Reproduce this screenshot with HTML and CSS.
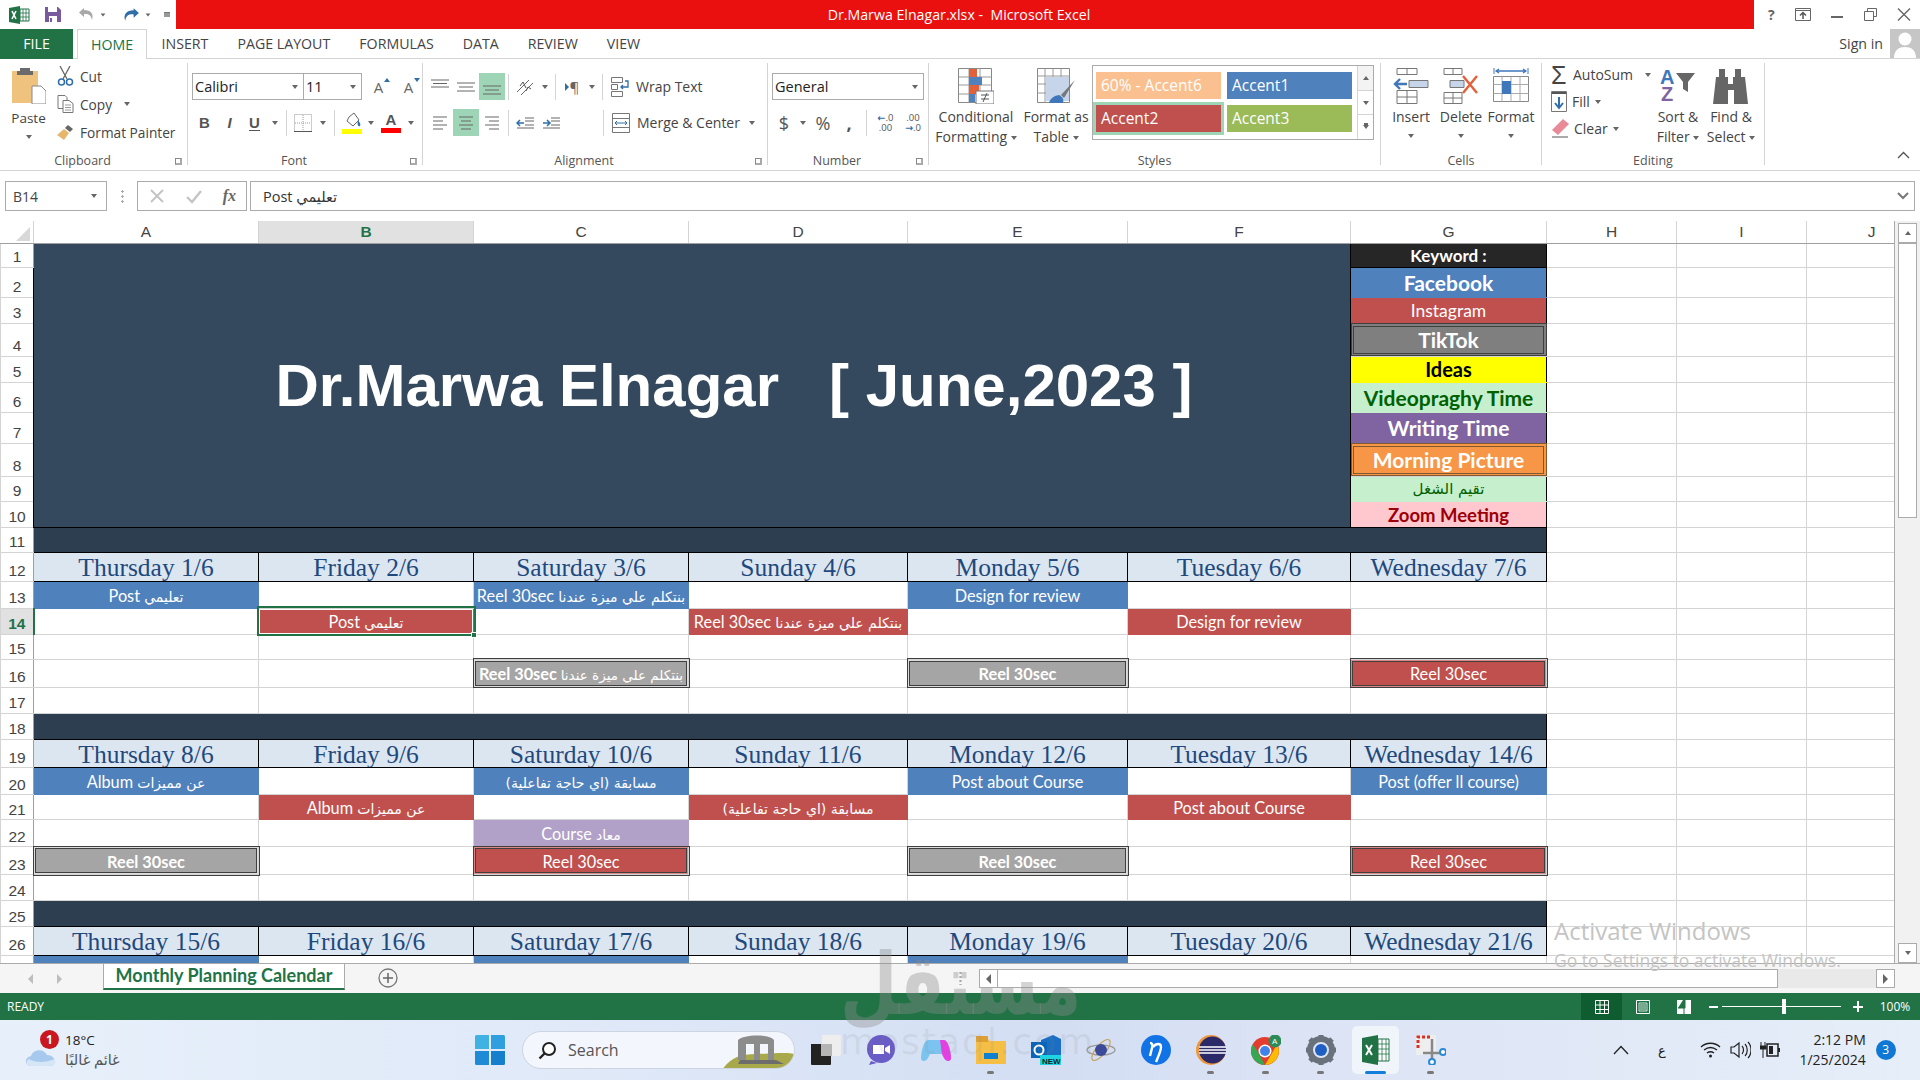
FILE: index.html
```html
<!DOCTYPE html>
<html lang="en">
<head>
  <meta charset="UTF-8">
  <title>Dr.Marwa Elnagar.xlsx - Microsoft Excel</title>
  <link rel="stylesheet" href="styles.css">
</head>
<body>
  <!-- title bar -->
  <header class="titlebar">
    <div class="qat">
      <svg width="24" height="18" viewBox="0 0 24 18"><path d="M1 2 12 0v18L1 16z" fill="#217346"/><path d="M12 3h9v12h-9z" fill="#fff" stroke="#217346"/><path d="M15 3v12M18 3v12M12 7h9M12 11h9" stroke="#217346" stroke-width=".8"/><path d="m4 5 4 8M8 5l-4 8" stroke="#fff" stroke-width="1.6"/></svg>
      <svg class="q-save" width="18" height="17" viewBox="0 0 18 17"><path d="M1 1h13l3 3v12H1z" fill="#7a5a9e"/><path d="M4 1h9v5H4z" fill="#fff"/><path d="M5 10h8v6H5z" fill="#fff"/><path d="M6 12h2v4H6z" fill="#7a5a9e"/></svg>
      <svg class="q-undo" width="19" height="15" viewBox="0 0 19 15"><path d="M7 1 2 5.500 7 10V7c4-.5 7 .5 8 6 2-6-1-10-8-10z" fill="#a8a8a8"/></svg>
      <span class="caret q-caret"></span>
      <svg class="q-redo" width="20" height="16" viewBox="0 0 19 15"><path d="M12 1l5 4.500L12 10V7C8 6.500 5 7.500 4 13 2 7 5 3 12 3z" fill="#2f6ea8"/></svg>
      <span class="caret q-caret"></span>
      <span class="q-more"></span>
    </div>
    <div class="doc-title">Dr.Marwa Elnagar.xlsx -&nbsp; Microsoft Excel</div>
    <div class="win-btns">
      <span class="win-help">?</span>
      <svg width="16" height="13" viewBox="0 0 16 13"><path d="M.5.5h15v12H.5z" fill="none" stroke="#666"/><path d="M1 2.500h14" stroke="#666"/><path d="M8 11V5M5 7.500l3-3 3 3" fill="none" stroke="#555" stroke-width="1.500"/></svg>
      <svg width="14" height="13" viewBox="0 0 14 13"><path d="M1 9h12" stroke="#666" stroke-width="2"/></svg>
      <svg width="13" height="13" viewBox="0 0 13 13"><path d="M3.500 3V.5h9v8H10M.5 3.500h9v9h-9z" fill="none" stroke="#666"/></svg>
      <svg width="14" height="13" viewBox="0 0 14 13"><path d="m1 .5 12 12M13 .5l-12 12" stroke="#666" stroke-width="1.400"/></svg>
    </div>
  </header>

  <!-- ribbon tabs -->
  <nav class="tabs">
    <a class="tab tab-file">FILE</a>
    <a class="tab tab-home">HOME</a>
    <a class="tab">INSERT</a>
    <a class="tab">PAGE LAYOUT</a>
    <a class="tab">FORMULAS</a>
    <a class="tab">DATA</a>
    <a class="tab">REVIEW</a>
    <a class="tab">VIEW</a>
    <span class="signin">Sign in</span>
    <div class="avatar">
      <svg width="30" height="29" viewBox="0 0 30 29"><circle cx="15" cy="10" r="6.500" fill="#fff"/><path d="M4 29c0-8 5-11 11-11s11 3 11 11z" fill="#fff"/></svg>
    </div>
  </nav>

  <!-- ribbon -->
  <section class="ribbon">
    <div class="group g-clipboard">
      <div class="group-body clip-body">
        <div class="paste">
          <svg width="34" height="37" viewBox="0 0 34 37"><path d="M0 4h26v32H0z" fill="#efc27e"/><path d="M8 4V1h10v3h3v4H5V4z" fill="#6b6b6b"/><path d="M20 19h9l5 5v13H20z" fill="#fff" stroke="#888"/></svg>
          <span class="paste-label">Paste</span>
          <span class="caret"></span>
        </div>
        <div class="clip-list">
          <div class="clip-item">
            <svg width="17" height="20" viewBox="0 0 17 20"><path d="M3 0l7 13M13 0 6 13" stroke="#666" stroke-width="1.300"/><circle cx="4.500" cy="16" r="3" fill="none" stroke="#2f6ea8" stroke-width="1.500"/><circle cx="12.500" cy="16" r="3" fill="none" stroke="#2f6ea8" stroke-width="1.500"/></svg>
            <span>Cut</span>
          </div>
          <div class="clip-item">
            <svg width="17" height="18" viewBox="0 0 17 18"><path d="M1 .5h7l2 2v11H1z" fill="#fff" stroke="#777"/><path d="M6 5.500h6l4 3v9H6z" fill="#fff" stroke="#777"/><path d="M8 10h6M8 12.500h6M8 15h6" stroke="#999"/></svg>
            <span>Copy</span><span class="caret copy-caret"></span>
          </div>
          <div class="clip-item">
            <svg width="17" height="17" viewBox="0 0 17 17"><path d="M11 1l5 4-3 3-5-4z" fill="#666"/><path d="M7 5l5 4-5 7-7-5z" fill="#e8b66b"/></svg>
            <span>Format Painter</span>
          </div>
        </div>
      </div>
      <div class="group-label has-launcher">Clipboard<span class="launcher"></span></div>
    </div>

    <div class="group g-font">
      <div class="group-body rows">
        <div class="row">
          <div class="combo combo-font"><span>Calibri</span><span class="caret"></span></div>
          <div class="combo combo-size"><span>11</span><span class="caret"></span></div>
          <span class="tb tb-grow">A<i class="up"></i></span>
          <span class="tb tb-grow">A<i class="down"></i></span>
        </div>
        <div class="row">
          <span class="tb w25 letter"><b>B</b></span>
          <span class="tb w25 letter"><b><em>I</em></b></span>
          <span class="tb w25 letter"><b class="under">U</b></span>
          <span class="tb w16"><span class="caret"></span></span>
          <span class="sep"></span>
          <span class="tb w25"><svg width="18" height="18" viewBox="0 0 18 18"><path d="M.5.500h17v17H.5z" fill="none" stroke="#999" stroke-dasharray="1 1"/><path d="M9 1v16M1 9h16" stroke="#999" stroke-dasharray="1 1"/><path d="M0 17.500h18" stroke="#555"/></svg></span>
          <span class="tb w16"><span class="caret"></span></span>
          <span class="sep"></span>
          <span class="tb w28 color-btn">
            <svg width="20" height="16" viewBox="0 0 20 16"><path d="M7 5 12 1l5 7-6 6-6-5z" fill="#fff" stroke="#666"/><path d="M16 8c2 3 3 4 2 6-2 1-3-2-2-6z" fill="#2f6ea8"/></svg>
            <i class="swatch sw-yellow"></i>
          </span>
          <span class="tb w10"><span class="caret"></span></span>
          <span class="tb w30 color-btn">
            <b class="big-a">A</b>
            <i class="swatch sw-red"></i>
          </span>
          <span class="tb w10"><span class="caret"></span></span>
        </div>
      </div>
      <div class="group-label has-launcher">Font<span class="launcher"></span></div>
    </div>

    <div class="group g-align">
      <div class="group-body rows">
        <div class="row">
          <span class="tb w26"><svg width="20" height="16" viewBox="0 0 20 16"><path d="M1 1h18M3 4.500h14M1 8h18" stroke="#666"/></svg></span>
          <span class="tb w26"><svg width="20" height="16" viewBox="0 0 20 16"><path d="M1 4h18M3 8h14M1 12h18" stroke="#666"/></svg></span>
          <span class="tb w26 on"><svg width="20" height="16" viewBox="0 0 20 16"><path d="M1 7h18M3 11h14M1 15h18" stroke="#666"/></svg></span>
          <span class="sep"></span>
          <span class="tb w26"><svg width="18" height="18" viewBox="0 0 18 18"><path d="M1 14 13 2" stroke="#666"/><path d="M5 17 17 5" stroke="#666"/><path d="m4 8 3-4 3 6M10 13l2-4 3 2" fill="none" stroke="#555"/></svg></span>
          <span class="tb w14"><span class="caret"></span></span>
          <span class="sep"></span>
          <span class="tb w26 rtl-mark"><i></i>&para;</span>
          <span class="tb w14"><span class="caret"></span></span>
          <span class="sep"></span>
          <span class="cmd">
            <svg width="18" height="20" viewBox="0 0 18 20"><path d="M.5.500h11v5H.5zM.5 7.500h6v5h-6zM.5 14.500h11v5H.5z" fill="#fff" stroke="#777"/><path d="M14 4h3v6h-7m2-2-2 2 2 2" fill="none" stroke="#2f6ea8" stroke-width="1.300"/></svg>
            <span>Wrap Text</span>
          </span>
        </div>
        <div class="row">
          <span class="tb w26"><svg width="16" height="14" viewBox="0 0 16 14"><path d="M1 1h14M1 5h10M1 9h14M1 13h10" stroke="#666"/></svg></span>
          <span class="tb w26 on"><svg width="16" height="14" viewBox="0 0 16 14"><path d="M1 1h14M3 5h10M1 9h14M3 13h10" stroke="#666"/></svg></span>
          <span class="tb w26"><svg width="16" height="14" viewBox="0 0 16 14"><path d="M1 1h14M5 5h10M1 9h14M5 13h10" stroke="#666"/></svg></span>
          <span class="sep"></span>
          <span class="tb w26"><svg width="18" height="12" viewBox="0 0 18 12"><path d="M9 1h9M9 4h9M9 8h9M1 11h17" stroke="#666"/><path d="M8 6H1m3-3L1 6l3 3" fill="none" stroke="#2f6ea8" stroke-width="1.500"/></svg></span>
          <span class="tb w26"><svg width="18" height="12" viewBox="0 0 18 12"><path d="M9 1h9M9 4h9M9 8h9M1 11h17" stroke="#666"/><path d="M1 6h7M5 3l3 3-3 3" fill="none" stroke="#2f6ea8" stroke-width="1.500"/></svg></span>
          <span class="spacer-a"></span>
          <span class="sep"></span>
          <span class="cmd">
            <svg width="18" height="20" viewBox="0 0 18 20"><path d="M.5.500h17v19H.5zM.5 5.500h17M.5 14.500h17" fill="none" stroke="#777"/><path d="M3 10h12M5 8l-2 2 2 2M13 8l2 2-2 2" fill="none" stroke="#2f6ea8"/></svg>
            <span>Merge &amp; Center</span><span class="caret merge-caret"></span>
          </span>
        </div>
      </div>
      <div class="group-label has-launcher">Alignment<span class="launcher"></span></div>
    </div>

    <div class="group g-number">
      <div class="group-body rows">
        <div class="row">
          <div class="combo combo-num"><span>General</span><span class="caret"></span></div>
        </div>
        <div class="row">
          <span class="tb w24 glyph">$</span>
          <span class="tb w14"><span class="caret"></span></span>
          <span class="tb w26 glyph">%</span>
          <span class="tb w26 glyph bold">,</span>
          <span class="sep sep-num"></span>
          <span class="tb w29 dec"><i class="arrow">&larr;</i>.0<br>.00</span>
          <span class="tb w26 dec">.00<br><i class="arrow">&rarr;</i>.0</span>
        </div>
      </div>
      <div class="group-label has-launcher">Number<span class="launcher"></span></div>
    </div>

    <div class="group g-styles">
      <div class="group-body styles-body">
        <div class="big big-cf">
          <svg width="36" height="36" viewBox="0 0 36 36"><path d="M.5.500h33v34H.5z" fill="#fff" stroke="#888"/><path d="M11 .5v34M22 .5v34M.5 9h33M.5 17h33M.5 26h33" stroke="#999"/><path d="M11 1h8v8h-8z" fill="#e2603a"/><path d="M11 9h13v8H11z" fill="#4f81bd"/><path d="M11 17h10v9H11z" fill="#e2603a"/><path d="M11 26h6v8h-6z" fill="#4f81bd"/><path d="M18 23h18v13H18z" fill="#fff" stroke="#777"/><path d="M23 27h8M23 31h8M29 25l-4 9" stroke="#555"/></svg>
          <span class="big-text">Conditional</span>
          <span class="big-text">Formatting <span class="caret"></span></span>
        </div>
        <div class="big big-ft">
          <svg width="38" height="36" viewBox="0 0 38 36"><path d="M.5.500h32v34H.5z" fill="#fff" stroke="#888"/><path d="M.5 8h32M8 .5v34M16 .5v34M24 .5v34M.5 16h32M.5 25h32" stroke="#999"/><path d="M9 9h23v24H9z" fill="#c6d5ea"/><path d="M38 12 24 27l3 3z" fill="#777"/><path d="M22 27c-6 1-9 4-10 8h14c1-3 0-6-4-8z" fill="#3f77ba"/></svg>
          <span class="big-text">Format as</span>
          <span class="big-text">Table <span class="caret"></span></span>
        </div>
        <div class="gallery">
          <div class="gallery-grid">
            <span class="style-chip chip-60">60% - Accent6</span>
            <span class="style-chip chip-a1">Accent1</span>
            <span class="style-chip chip-a2">Accent2</span>
            <span class="style-chip chip-a3">Accent3</span>
          </div>
          <div class="gallery-scroll">
            <span class="gs-up"><i class="tri-up"></i></span>
            <span><span class="caret"></span></span>
            <span class="gs-more"><span class="caret"></span></span>
          </div>
        </div>
      </div>
      <div class="group-label">Styles</div>
    </div>

    <div class="group g-cells">
      <div class="group-body cells-body">
        <div class="big big-cell">
          <svg width="36" height="36" viewBox="0 0 36 36"><path d="M4 .5h20v6H4zM14 .5v6M4 22.500h20v13H4zM14 22.500v13M4 29h20" fill="#fff" stroke="#777"/><path d="M16 12.500h19v7H16z" fill="#c6d5ea" stroke="#777"/><path d="M14 16H2m5-5-5 5 5 5" fill="none" stroke="#3f77ba" stroke-width="2.400"/></svg>
          <span class="big-text">Insert</span>
          <span class="caret cell-caret"></span>
        </div>
        <div class="big big-cell">
          <svg width="36" height="36" viewBox="0 0 36 36"><path d="M1 .5h18v6H1zM10 .5v6M1 24.500h18v11H1zM10 24.500v11M1 30h18" fill="#fff" stroke="#777"/><path d="M7 12.500h14v7H7z" fill="#c6d5ea" stroke="#777"/><path d="m20 8 14 17M34 8 20 25" stroke="#e2603a" stroke-width="2.400"/></svg>
          <span class="big-text">Delete</span>
          <span class="caret cell-caret"></span>
        </div>
        <div class="big big-cell">
          <svg width="36" height="36" viewBox="0 0 36 36"><path d="M1 0v6M35 0v6" stroke="#3f77ba"/><path d="M3 3h30M6 1 3 3l3 2M30 1l3 2-3 2" fill="none" stroke="#3f77ba" stroke-width="1.300"/><path d="M.5 8.500h35v25H.5z" fill="#fff" stroke="#888"/><path d="M9 8.500v25M18 8.500v25M27 8.500v25M.5 16.500h35M.5 25.500h35" stroke="#aaa"/><path d="M9 13h9v13H9z" fill="#3f77ba"/></svg>
          <span class="big-text">Format</span>
          <span class="caret cell-caret"></span>
        </div>
      </div>
      <div class="group-label">Cells</div>
    </div>

    <div class="group g-editing">
      <div class="group-body edit-body">
        <div class="edit-list">
          <div class="edit-item"><span class="sigma">&Sigma;</span><span>AutoSum</span><span class="caret sum-caret"></span></div>
          <div class="edit-item">
            <svg width="16" height="21" viewBox="0 0 16 21"><path d="M.5.500h15v20H.5z" fill="#fff" stroke="#777"/><path d="M1 2h14" stroke="#555" stroke-width="2"/><path d="M8 6v11M4 12l4 5 4-5" fill="none" stroke="#2f6ea8" stroke-width="2"/></svg>
            <span>Fill</span><span class="caret"></span>
          </div>
          <div class="edit-item">
            <svg width="18" height="19" viewBox="0 0 18 19"><path d="M12 0l6 5L7 16 1 11z" fill="#e88a97"/><path d="M1 18h16" stroke="#555"/></svg>
            <span>Clear</span><span class="caret"></span>
          </div>
        </div>
        <div class="big big-sort">
          <svg class="sort-ico" width="36" height="36" viewBox="0 0 36 36"><text x="0" y="16" class="az az-a">A</text><text x="1" y="33" class="az az-z">Z</text><path d="M16 5h19l-7 9v10l-5-3v-7z" fill="#666"/></svg>
          <span class="big-text">Sort &amp;</span>
          <span class="big-text">Filter <span class="caret"></span></span>
        </div>
        <div class="big big-find">
          <svg width="36" height="36" viewBox="0 0 36 36"><path d="M6 1h6v8h-6zM22 1h6v8h-6z" fill="#666"/><path d="M3 9h12v7h5V9h12l3 27H21V22h-6v14H0z" fill="#666"/></svg>
          <span class="big-text">Find &amp;</span>
          <span class="big-text">Select <span class="caret"></span></span>
        </div>
      </div>
      <div class="group-label">Editing</div>
    </div>

    <div class="collapse">
      <svg width="13" height="8" viewBox="0 0 13 8"><path d="m1 7 5.500-5.500L12 7" fill="none" stroke="#555" stroke-width="1.400"/></svg>
    </div>
  </section>

  <!-- formula bar -->
  <section class="formula">
    <div class="name-box"><span>B14</span><span class="caret"></span></div>
    <div class="fdots"></div>
    <div class="fx-box">
      <svg width="16" height="16" viewBox="0 0 16 16"><path d="m2 2 12 12M14 2 2 14" stroke="#c4c4c4" stroke-width="2"/></svg>
      <svg width="16" height="16" viewBox="0 0 16 16"><path d="m1 9 5 5L15 3" fill="none" stroke="#c4c4c4" stroke-width="2.400"/></svg>
      <span class="fx">fx</span>
    </div>
    <div class="f-input">
      <span>Post تعليمي</span>
      <svg width="12" height="8" viewBox="0 0 12 8"><path d="m1 1 5 5 5-5" fill="none" stroke="#777" stroke-width="2"/></svg>
    </div>
  </section>

  <!-- sheet -->
  <section class="sheet">
    <div class="grid-wrap">
      <table class="grid">
        <colgroup>
          <col class="c-head"><col class="c-a"><col class="c-b"><col class="c-c"><col class="c-d"><col class="c-e"><col class="c-f"><col class="c-g"><col class="c-h"><col class="c-i"><col class="c-j">
        </colgroup>
        <tr class="h22 col-heads">
          <th class="corner"><i></i></th><th>A</th><th class="sel-col">B</th><th>C</th><th>D</th><th>E</th><th>F</th><th>G</th><th>H</th><th>I</th><th>J</th>
        </tr>
        <tr class="h24"><th>1</th><td class="banner" rowspan="10" colspan="6">Dr.Marwa Elnagar&nbsp;&nbsp; [ June,2023 ]</td><td class="k k-black">Keyword :</td><td></td><td></td><td></td></tr>
        <tr class="h30"><th>2</th><td class="k k-blue">Facebook</td><td></td><td></td><td></td></tr>
        <tr class="h26"><th>3</th><td class="k k-red">Instagram</td><td></td><td></td><td></td></tr>
        <tr class="h33"><th>4</th><td class="k k-gray">TikTok</td><td></td><td></td><td></td></tr>
        <tr class="h26"><th>5</th><td class="k k-yellow">Ideas</td><td></td><td></td><td></td></tr>
        <tr class="h30"><th>6</th><td class="k k-green">Videopraghy Time</td><td></td><td></td><td></td></tr>
        <tr class="h31"><th>7</th><td class="k k-purple">Writing Time</td><td></td><td></td><td></td></tr>
        <tr class="h33"><th>8</th><td class="k k-orange">Morning Picture</td><td></td><td></td><td></td></tr>
        <tr class="h25"><th>9</th><td class="k k-review"><span class="ar">تقيم الشغل</span></td><td></td><td></td><td></td></tr>
        <tr class="h26"><th>10</th><td class="k k-pink">Zoom Meeting</td><td></td><td></td><td></td></tr>
        <tr class="h25"><th>11</th><td class="band" colspan="7"></td><td></td><td></td><td></td></tr>
        <tr class="h29"><th>12</th><td class="day">Thursday 1/6</td><td class="day">Friday 2/6</td><td class="day">Saturday 3/6</td><td class="day">Sunday 4/6</td><td class="day">Monday 5/6</td><td class="day">Tuesday 6/6</td><td class="day">Wednesday 7/6</td><td></td><td></td><td></td></tr>
        <tr class="h27"><th>13</th><td class="ev blue">Post <span class="ar">تعليمي</span></td><td></td><td class="ev blue">Reel 30sec <span class="ar">بنتكلم علي ميزة عندنا</span></td><td></td><td class="ev blue">Design for review</td><td></td><td></td><td></td><td></td><td></td></tr>
        <tr class="h26 sel-row"><th>14</th><td></td><td class="ev red selected">Post <span class="ar">تعليمي</span><i class="handle"></i></td><td></td><td class="ev red">Reel 30sec <span class="ar">بنتكلم علي ميزة عندنا</span></td><td></td><td class="ev red">Design for review</td><td></td><td></td><td></td><td></td></tr>
        <tr class="h25"><th>15</th><td></td><td></td><td></td><td></td><td></td><td></td><td></td><td></td><td></td><td></td></tr>
        <tr class="h28"><th>16</th><td></td><td></td><td class="ev check">Reel 30sec <span class="ar">بنتكلم علي ميزة عندنا</span></td><td></td><td class="ev check">Reel 30sec</td><td></td><td class="ev red-box">Reel 30sec</td><td></td><td></td><td></td></tr>
        <tr class="h26"><th>17</th><td></td><td></td><td></td><td></td><td></td><td></td><td></td><td></td><td></td><td></td></tr>
        <tr class="h26"><th>18</th><td class="band" colspan="7"></td><td></td><td></td><td></td></tr>
        <tr class="h28"><th>19</th><td class="day">Thursday 8/6</td><td class="day">Friday 9/6</td><td class="day">Saturday 10/6</td><td class="day">Sunday 11/6</td><td class="day">Monday 12/6</td><td class="day">Tuesday 13/6</td><td class="day">Wednesday 14/6</td><td></td><td></td><td></td></tr>
        <tr class="h27"><th>20</th><td class="ev blue">Album <span class="ar">عن مميزات</span></td><td></td><td class="ev blue"><span class="ar">مسابقة (اي حاجة تفاعلية)</span></td><td></td><td class="ev blue">Post about Course</td><td></td><td class="ev blue">Post (offer ll course)</td><td></td><td></td><td></td></tr>
        <tr class="h25"><th>21</th><td></td><td class="ev red">Album <span class="ar">عن مميزات</span></td><td></td><td class="ev red"><span class="ar">مسابقة (اي حاجة تفاعلية)</span></td><td></td><td class="ev red">Post about Course</td><td></td><td></td><td></td><td></td></tr>
        <tr class="h27"><th>22</th><td></td><td></td><td class="ev lilac">Course <span class="ar">معاد</span></td><td></td><td></td><td></td><td></td><td></td><td></td><td></td></tr>
        <tr class="h28"><th>23</th><td class="ev check">Reel 30sec</td><td></td><td class="ev red-box">Reel 30sec</td><td></td><td class="ev check">Reel 30sec</td><td></td><td class="ev red-box">Reel 30sec</td><td></td><td></td><td></td></tr>
        <tr class="h26"><th>24</th><td></td><td></td><td></td><td></td><td></td><td></td><td></td><td></td><td></td><td></td></tr>
        <tr class="h26"><th>25</th><td class="band" colspan="7"></td><td></td><td></td><td></td></tr>
        <tr class="h28"><th>26</th><td class="day">Thursday 15/6</td><td class="day">Friday 16/6</td><td class="day">Saturday 17/6</td><td class="day">Sunday 18/6</td><td class="day">Monday 19/6</td><td class="day">Tuesday 20/6</td><td class="day">Wednesday 21/6</td><td></td><td></td><td></td></tr>
        <tr class="h27"><th></th><td class="ev blue"></td><td></td><td class="ev blue"></td><td></td><td class="ev blue"></td><td></td><td></td><td></td><td></td><td></td></tr>
      </table>
    </div>
    <aside class="vscroll">
      <span class="sb-btn"><i class="tri-up"></i></span>
      <span class="sb-thumb"></span>
      <span class="sb-track"></span>
      <span class="sb-btn"><span class="caret"></span></span>
    </aside>
  </section>

  <!-- sheet tabs -->
  <section class="sheet-tabs">
    <span class="nav-tri tri-l"></span>
    <span class="nav-tri tri-r"></span>
    <a class="sheet-tab">Monthly Planning Calendar</a>
    <svg class="add-sheet" width="20" height="20" viewBox="0 0 20 20"><circle cx="10" cy="10" r="9" fill="none" stroke="#777" stroke-width="1.300"/><path d="M10 5v10M5 10h10" stroke="#666" stroke-width="1.500"/></svg>
    <span class="tdots"></span>
    <div class="hscroll">
      <span class="hs-btn"><i class="tri-l dark"></i></span>
      <span class="hs-thumb"></span>
      <span class="hs-track"></span>
      <span class="hs-btn"><i class="tri-r dark"></i></span>
    </div>
  </section>

  <!-- status bar -->
  <footer class="status">
    <span class="ready">READY</span>
    <div class="views">
      <span class="view view-on"><svg width="14" height="14" viewBox="0 0 14 14"><path d="M.5.500h13v13H.5zM5 .5v13M9.500.5v13M.5 5h13M.5 9.500h13" fill="none" stroke="#fff"/></svg></span>
      <span class="view"><svg width="14" height="14" viewBox="0 0 14 14"><path d="M.5.500h13v13H.5z" fill="none" stroke="#fff"/><path d="M3 3h8v8H3zM4 5h6M4 7h6M4 9h6" fill="none" stroke="#fff" stroke-width=".8"/></svg></span>
      <span class="view"><svg width="14" height="14" viewBox="0 0 14 14"><path d="M0 0h14v14H0z" fill="#fff"/><path d="M6 0h2v8H1M7 8v6" fill="#217346" stroke="#217346"/></svg></span>
    </div>
    <div class="zoomer">
      <i class="z-minus"></i>
      <span class="z-track"><i class="z-thumb"></i></span>
      <i class="z-plus"></i>
    </div>
    <span class="pct">100%</span>
  </footer>

  <!-- windows taskbar -->
  <footer class="taskbar">
    <div class="weather">
      <div class="w-icon">
        <svg width="32" height="24" viewBox="0 0 32 24"><path d="M7 22c-8 0-8-9-1-10 2-7 13-8 16-1 9 0 11 11 2 11z" fill="#a8c9ee"/><path d="M7 22c-6 0-7-5-3-7 6 4 16 4 26 0 1 4-1 7-6 7z" fill="#d6e6f7"/></svg>
        <span class="w-badge">1</span>
      </div>
      <div class="w-text">
        <span>18°C</span>
        <span class="w-sub">غائم غالبًا</span>
      </div>
    </div>
    <svg class="start" width="30" height="30" viewBox="0 0 30 30"><path d="M0 1.500A1.500 1.500 0 0 1 1.500 0H14v14H0z" fill="#3fb1e3"/><path d="M16 0h12.500A1.500 1.500 0 0 1 30 1.500V14H16z" fill="#2f9fe0"/><path d="M0 16h14v14H1.500A1.500 1.500 0 0 1 0 28.500z" fill="#1f8ad6"/><path d="M16 16h14v12.500a1.500 1.500 0 0 1-1.500 1.500H16z" fill="#157fce"/></svg>
    <div class="search">
      <svg width="19" height="19" viewBox="0 0 19 19"><circle cx="11" cy="8" r="6" fill="#fff" stroke="#222" stroke-width="2"/><path d="m6.500 12.500-5 5" stroke="#222" stroke-width="2.400"/></svg>
      <span>Search</span>
      <svg class="search-art" width="72" height="38" viewBox="0 0 72 38"><path d="M0 38C8 26 18 22 34 22c16 0 30-2 38 0 0 6-6 16-22 16z" fill="#a8a94a"/><path d="M16 8c6-6 32-6 36 0v20H46V12h-8v16h-6V12h-8v16h-8z" fill="#8c8c8c"/><path d="M18 28h36l8 4H16z" fill="#6d6d6d"/></svg>
    </div>
    <div class="apps">
      <span class="app"><svg width="30" height="30" viewBox="0 0 30 30"><path d="M11 0h18a1 1 0 0 1 1 1v18a2 2 0 0 1-2 2H11z" fill="#eee"/><path d="M0 9h20v20a1 1 0 0 1-1 1H1a1 1 0 0 1-1-1z" fill="#222"/><path d="M10 9h11v12H10z" fill="#b5b5b5"/></svg></span>
      <span class="app"><svg width="30" height="30" viewBox="0 0 30 30"><circle cx="15" cy="14" r="14" fill="#6a5cc6"/><path d="M5 26l-2 4 8-2z" fill="#6a5cc6"/><path d="M7 10h11v9H7z" fill="#fff"/><path d="m19 13 5-3v9l-5-3z" fill="#fff"/></svg></span>
      <span class="app"><svg width="30" height="24" viewBox="0 0 30 24"><path d="M7 2h16c4 0 7 12 7 18 0 4-5 4-7 0l-2-4H9l-2 4c-2 4-7 4-7 0C0 14 3 2 7 2z" fill="#7cc4f0"/><path d="M19 2h4c4 0 7 12 7 18 0 4-5 4-7 0l-2-4z" fill="#e83ee6"/></svg></span>
      <span class="app app-run"><svg width="30" height="28" viewBox="0 0 30 28"><path d="M0 2h11l3 3h16v23H0z" fill="#f5bf45"/><path d="M0 0h12v6H0z" fill="#e0a030"/><path d="M8 17h14v6H8z" fill="#0f7fd0"/></svg></span>
      <span class="app"><svg width="30" height="30" viewBox="0 0 30 30"><path d="M10 5 22 0l8 4v18H10z" fill="#1a6fc4"/><path d="M0 7h16v16H0z" fill="#0a64b8"/><circle cx="8" cy="15" r="4.500" fill="none" stroke="#fff" stroke-width="2"/><path d="M9 20h21v10H9z" fill="#1fd4e0"/><text x="11" y="28.500" class="new-tag">NEW</text></svg></span>
      <span class="app"><svg width="30" height="28" viewBox="0 0 30 28"><ellipse cx="15" cy="14" rx="14" ry="5" fill="none" stroke="#9a9a9a" stroke-width="1.300"/><ellipse cx="15" cy="14" rx="5" ry="13" fill="none" stroke="#c7a25a" stroke-width="1.100" transform="rotate(40 15 14)"/><circle cx="15" cy="14" r="6" fill="#3c4a9a"/></svg></span>
      <span class="app"><svg width="30" height="30" viewBox="0 0 30 30"><circle cx="15" cy="15" r="15" fill="#1273e6"/><path d="M9 8c2 0 3 1 2 5l-2 8M12 12c3-4 8-4 8 0 0 4-3 10-5 15" fill="none" stroke="#fff" stroke-width="2.400"/></svg></span>
      <span class="app app-run"><svg width="30" height="30" viewBox="0 0 30 30"><circle cx="15" cy="15" r="15" fill="#f0963c"/><circle cx="16.500" cy="15" r="13.500" fill="#2a2a68"/><path d="M3 12h27M3 15h27M3 18h27" stroke="#fff" stroke-width="1.500"/></svg></span>
      <span class="app app-run"><svg width="30" height="30" viewBox="0 0 30 30"><circle cx="14" cy="16" r="14" fill="#e33b2e"/><path d="M14 30a14 14 0 0 1-12-21l7 12z" fill="#34a853"/><path d="M26 9a14 14 0 0 1-12 21l7-12z" fill="#fbbc05"/><circle cx="14" cy="16" r="6.500" fill="#fff"/><circle cx="14" cy="16" r="5" fill="#3f83e8"/><circle cx="24" cy="6" r="6.500" fill="#2e8b57"/><text x="21" y="9" class="chrome-a">A</text></svg></span>
      <span class="app app-run"><svg width="30" height="30" viewBox="0 0 30 30"><circle cx="15" cy="15" r="11" fill="none" stroke="#69727c" stroke-width="6"/><path d="M15 0v5M15 25v5M0 15h5M25 15h5M4 4l4 4M22 22l4 4M4 26l4-4M22 8l4-4" stroke="#69727c" stroke-width="5"/><circle cx="15" cy="15" r="6" fill="#1f5fc4"/></svg></span>
      <span class="app app-active"><svg width="28" height="30" viewBox="0 0 28 30"><path d="M0 3 16 0v30L0 27z" fill="#217346"/><path d="M16 4h11v22H16z" fill="#fff" stroke="#217346"/><path d="M20 4v22M24 4v22M16 9h11M16 14h11M16 19h11" stroke="#217346" stroke-width=".8"/><path d="m4 10 6 10M10 10 4 20" stroke="#fff" stroke-width="2"/></svg><i class="app-bar"></i></span>
      <span class="app app-run"><svg width="30" height="30" viewBox="0 0 30 30"><path d="M0 0h20v20H0z" fill="#eee"/><path d="M2 13V2h12" fill="none" stroke="#d93025" stroke-width="3" stroke-dasharray="3 2"/><path d="M16 4v22" stroke="#888" stroke-width="2.500"/><path d="M7 18h21" stroke="#888" stroke-width="2.500"/><circle cx="27" cy="17" r="3" fill="#fff" stroke="#2a8ad4" stroke-width="2"/><circle cx="16" cy="27" r="3" fill="#fff" stroke="#2a8ad4" stroke-width="2"/></svg></span>
    </div>
    <div class="tray">
      <svg class="tray-up" width="16" height="10" viewBox="0 0 16 10"><path d="m1 9 7-7.500L15 9" fill="none" stroke="#222" stroke-width="1.300"/></svg>
      <span class="lang">ع</span>
      <svg class="tray-wifi" width="21" height="16" viewBox="0 0 21 16"><path d="M1 5c5-5 14-5 19 0M4 8c4-3 9-3 13 0M7 11c2-1.500 5-1.500 7 0" fill="none" stroke="#222" stroke-width="1.400"/><circle cx="10.500" cy="14" r="1.500" fill="#222"/></svg>
      <svg class="tray-icon" width="21" height="18" viewBox="0 0 21 18"><path d="M1 6h3l5-4v14l-5-4H1z" fill="none" stroke="#222" stroke-width="1.200"/><path d="M12 5c2 2 2 6 0 8M15 3c3 3 3 9 0 12M18 1c4 4 4 12 0 16" fill="none" stroke="#222" stroke-width="1.200"/></svg>
      <svg class="tray-icon" width="20" height="18" viewBox="0 0 20 18"><path d="M7 3h11v12H7z" fill="none" stroke="#222" stroke-width="1.500"/><path d="M18 7h2v4h-2z" fill="#222"/><path d="M9 5h4v8H9z" fill="#222"/><path d="M1 1v4M5 1v4M0 5h6v3H0zM3 8v9" fill="#222" stroke="#222"/></svg>
      <div class="clock"><span>2:12 PM</span><span>1/25/2024</span></div>
      <span class="notif">3</span>
    </div>
  </footer>

  <!-- overlays -->
  <div class="activate">
    <div class="act-title">Activate Windows</div>
    <div class="act-sub">Go to Settings to activate Windows.</div>
  </div>
  <div class="watermark">
    <div class="wm-logo">مستقل</div>
    <div class="wm-url">mostaql.com</div>
  </div>
</body>
</html>
```

FILE: styles.css
```css
* {
  box-sizing: border-box;
}

html, body {
  margin: 0;
  padding: 0;
}

body {
  width: 1920px;
  height: 1080px;
  overflow: hidden;
  position: relative;
  display: flex;
  flex-direction: column;
  background: #fff;
  font-family: "Open Sans", "DejaVu Sans", sans-serif;
  font-size: 14px;
  color: #444;
}

svg {
  display: block;
  flex: none;
}

i {
  font-style: normal;
}

.caret {
  display: inline-block;
  width: 0;
  height: 0;
  border-left: 3.500px solid transparent;
  border-right: 3.500px solid transparent;
  border-top: 4px solid #666;
  vertical-align: middle;
}

/* title bar */
.titlebar {
  display: flex;
  height: 29px;
  flex: none;
}

.qat {
  width: 176px;
  display: flex;
  align-items: center;
  padding-left: 8px;
}

.q-save { margin-left: 12px; }
.q-undo { margin-left: 15px; }
.q-redo { margin-left: 15px; }
.q-caret { margin-left: 4px; transform: scale(.8); }

.q-more {
  margin-left: 13px;
  width: 6px;
  height: 5px;
  border-top: 1px solid #777;
  border-bottom: 4px solid #999;
}

.doc-title {
  width: 1578px;
  padding-right: 12px;
  background: #e9100f;
  color: #fff;
  font-size: 14.200px;
  text-align: center;
  line-height: 29px;
}

.win-btns {
  flex: 1;
  display: flex;
  align-items: center;
  justify-content: space-between;
  padding: 0 9px 0 14px;
}

.win-help {
  font-weight: 700;
  color: #666;
  font-size: 14px;
}

/* tabs */
.tabs {
  display: flex;
  height: 30px;
  flex: none;
  align-items: stretch;
  border-bottom: 1px solid #d4d4d4;
  font-size: 14.200px;
}

.tab {
  line-height: 29px;
  padding: 0 14.500px;
  color: #444;
}

.tab-file {
  width: 73px;
  height: 30px;
  margin-right: 4px;
  padding: 0;
  text-align: center;
  background: #217346;
  color: #fff;
}

.tab-home {
  width: 70px;
  height: 30px;
  padding: 0;
  text-align: center;
  color: #217346;
  background: #fff;
  border: 1px solid #d4d4d4;
  border-bottom: 0;
}

.signin {
  margin-left: auto;
  line-height: 29px;
  padding-right: 7px;
}

.avatar {
  width: 30px;
  background: #c6c6c6;
}

/* ribbon */
.ribbon {
  display: flex;
  height: 112px;
  flex: none;
  border-bottom: 1px solid #d4d4d4;
}

.group {
  display: flex;
  flex-direction: column;
  height: 102px;
  margin-top: 4px;
  border-right: 1px solid #d4d4d4;
  flex: none;
  position: relative;
}

.g-clipboard { width: 188px; }
.g-font { width: 235px; }
.g-align { width: 345px; }
.g-number { width: 161px; }
.g-styles { width: 452px; }
.g-cells { width: 161px; }
.g-editing { width: 223px; }

.group-body {
  flex: 1;
  min-height: 0;
}

.group-label {
  height: 16px;
  text-align: center;
  font-size: 12.500px;
  line-height: 24px;
  color: #555;
  position: relative;
}

.has-launcher {
  padding-right: 22px;
}

.launcher {
  position: absolute;
  right: 5px;
  top: 9px;
  width: 7px;
  height: 7px;
  border-left: 1px solid #888;
  border-top: 1px solid #888;
  border-bottom: 2px solid #aaa;
  border-right: 2px solid #aaa;
}

.clip-body {
  display: flex;
}

.paste {
  width: 57px;
  padding-top: 4px;
  display: flex;
  flex-direction: column;
  align-items: center;
  font-size: 13.500px;
}

.paste-label {
  margin-top: 5px;
  line-height: 18px;
}

.paste .caret {
  margin-top: 8px;
}

.clip-list {
  display: flex;
  flex-direction: column;
  margin-top: -1px;
  font-size: 13.700px;
}

.clip-item {
  height: 28px;
  display: flex;
  align-items: center;
  gap: 6px;
}

.copy-caret {
  margin-left: 6px;
}

.rows {
  display: flex;
  flex-direction: column;
  gap: 9px;
  padding: 10px 0 0 4px;
}

.row {
  display: flex;
  height: 27px;
  align-items: center;
}

.combo {
  height: 27px;
  display: flex;
  align-items: center;
  justify-content: space-between;
  border: 1px solid #ababab;
  padding: 0 5px 0 2px;
  color: #222;
  font-size: 14.500px;
}

.combo-font { width: 114px; }
.combo-size { width: 60px; margin-left: -1px; }
.combo-num { width: 152px; }

.tb {
  height: 27px;
  display: flex;
  align-items: center;
  justify-content: center;
  flex: none;
}

.w10 { width: 10px; }
.w14 { width: 14px; }
.w16 { width: 16px; }
.w24 { width: 24px; }
.w25 { width: 25px; }
.w26 { width: 26px; }
.w28 { width: 28px; }
.w29 { width: 29px; }
.w30 { width: 30px; }

.spacer-a {
  width: 36px;
  flex: none;
}

.on {
  background: #9fd5b7;
}

.letter {
  font-family: "Liberation Sans", sans-serif;
  font-size: 15px;
  color: #555;
}

.under {
  border-bottom: 1px solid #555;
  line-height: 15px;
}

.tb-grow {
  width: 27px;
  margin-left: 3px;
  font-size: 15px;
  color: #666;
  position: relative;
}

.tb-grow i {
  position: absolute;
  right: 2px;
  top: 5px;
  border-left: 3px solid transparent;
  border-right: 3px solid transparent;
}

.up { border-bottom: 4px solid #2f6ea8; }
.down { border-top: 4px solid #2f6ea8; }

.sep {
  width: 1px;
  height: 26px;
  background: #d4d4d4;
  margin: 0 3px;
  flex: none;
}

.sep-num {
  margin: 0 4px;
}

.color-btn {
  flex-direction: column;
  gap: 1px;
}

.swatch {
  display: block;
  width: 20px;
  height: 5px;
}

.sw-yellow { background: #ff0; }
.sw-red { background: #f00; }

.big-a {
  font-family: "Liberation Sans", sans-serif;
  font-size: 15px;
  line-height: 15px;
  color: #555;
}

.rtl-mark {
  font-size: 15px;
  color: #666;
  gap: 1px;
}

.rtl-mark i {
  border-top: 4px solid transparent;
  border-bottom: 4px solid transparent;
  border-left: 4px solid #2f6ea8;
}

.cmd {
  display: flex;
  align-items: center;
  gap: 7px;
  margin-left: 5px;
  white-space: nowrap;
}

.merge-caret {
  margin-left: 2px;
}

.glyph {
  font-size: 18px;
  color: #555;
}

.bold {
  font-weight: 700;
}

.dec {
  font-size: 9.500px;
  line-height: 10px;
  color: #555;
  display: block;
  text-align: center;
  padding-top: 4px;
}

.arrow {
  color: #2f6ea8;
  font-weight: 700;
}

/* big buttons */
.big {
  display: flex;
  flex-direction: column;
  align-items: center;
  padding-top: 5px;
  flex: none;
}

.big svg {
  margin-bottom: 3px;
}

.big-text {
  line-height: 20px;
  white-space: nowrap;
}

.styles-body {
  display: flex;
}

.big-cf { width: 94px; }
.big-ft { width: 66px; }

.gallery {
  width: 282px;
  height: 75px;
  margin: 2px 0 0 3px;
  border: 1px solid #ababab;
  display: flex;
  flex: none;
}

.gallery-grid {
  display: grid;
  grid-template-columns: 125px 125px;
  grid-auto-rows: 27px;
  gap: 6px;
  padding: 6px 3px;
  width: 264px;
}

.style-chip {
  color: #fff;
  padding-left: 5px;
  line-height: 27px;
  font-size: 15.500px;
  white-space: nowrap;
}

.chip-60 { background: #fac090; }
.chip-a1 { background: #4f81bd; }
.chip-a2 { background: #c0504d; outline: 3px solid #9fd5b7; }
.chip-a3 { background: #9bbb59; }

.gallery-scroll {
  flex: 1;
  display: flex;
  flex-direction: column;
  border-left: 1px solid #d4d4d4;
}

.gallery-scroll > span {
  flex: 1;
  display: flex;
  align-items: center;
  justify-content: center;
  border-bottom: 1px solid #d4d4d4;
}

.gallery-scroll > span:last-child {
  border-bottom: 0;
}

.gs-up {
  background: #f3f3f3;
}

.gs-more .caret {
  box-shadow: 0 -3px 0 -1px #666;
}

.tri-up {
  width: 0;
  height: 0;
  border-left: 3.500px solid transparent;
  border-right: 3.500px solid transparent;
  border-bottom: 4px solid #666;
}

.cells-body {
  display: flex;
  padding-left: 5px;
}

.big-cell { width: 50px; }

.cell-caret {
  margin-top: 7px;
}

.edit-body {
  display: flex;
}

.edit-list {
  width: 110px;
  margin-top: -2px;
  padding-left: 9px;
  display: flex;
  flex-direction: column;
  flex: none;
}

.edit-item {
  height: 27px;
  display: flex;
  align-items: center;
  gap: 5px;
  white-space: nowrap;
}

.sigma {
  width: 17px;
  font-size: 25px;
  line-height: 24px;
  color: #444;
  font-family: "Liberation Sans", sans-serif;
}

.sum-caret {
  margin-left: 7px;
}

.big-sort { width: 52px; }
.big-find { width: 54px; }

.sort-ico {
  overflow: visible;
}

.az {
  font-family: "Liberation Sans", sans-serif;
  font-size: 20px;
  font-weight: 700;
}

.az-a { fill: #3f77ba; }
.az-z { fill: #8064a2; }

.collapse {
  flex: 1;
  display: flex;
  justify-content: flex-end;
  align-items: flex-end;
  padding: 0 10px 6px 0;
  height: 106px;
}

/* formula bar */
.formula {
  height: 50px;
  flex: none;
  display: flex;
  padding: 10px 5px 10px 5px;
  align-items: stretch;
}

.name-box {
  width: 102px;
  border: 1px solid #ababab;
  display: flex;
  align-items: center;
  justify-content: space-between;
  padding: 0 9px 0 7px;
  font-size: 14px;
}

.fdots {
  width: 30px;
  background: radial-gradient(circle, #aaa 1px, transparent 1.300px) center top / 3px 5px repeat-y;
  margin: 8px 0;
}

.fx-box {
  width: 110px;
  border: 1px solid #ababab;
  display: flex;
  align-items: center;
  justify-content: space-between;
  padding: 0 10px 0 11px;
}

.fx {
  font-family: "Liberation Serif", serif;
  font-style: italic;
  font-weight: 700;
  font-size: 16px;
  color: #666;
}

.f-input {
  flex: 1;
  margin-left: 3px;
  border: 1px solid #ababab;
  display: flex;
  align-items: center;
  justify-content: space-between;
  padding: 0 5px 0 12px;
  font-size: 14.500px;
  color: #333;
}

/* sheet */
.sheet {
  height: 743px;
  flex: none;
  display: flex;
  overflow: hidden;
  border-bottom: 1px solid #ababab;
}

.grid-wrap {
  width: 1895px;
  overflow: hidden;
  border-right: 1px solid #ababab;
  flex: none;
}

.grid {
  table-layout: fixed;
  border-collapse: collapse;
  width: 1936px;
  font-family: "Lato", "DejaVu Sans", sans-serif;
  font-size: 15px;
}

.c-head { width: 33px; }
.c-a { width: 225px; }
.c-b { width: 215px; }
.c-c { width: 215px; }
.c-d { width: 219px; }
.c-e { width: 220px; }
.c-f { width: 223px; }
.c-g { width: 196px; }
.c-h { width: 130px; }
.c-i { width: 130px; }
.c-j { width: 130px; }

.h22 { height: 22px; }
.h24 { height: 24px; }
.h25 { height: 25px; }
.h26 { height: 26px; }
.h27 { height: 27px; }
.h28 { height: 28px; }
.h29 { height: 29px; }
.h30 { height: 30px; }
.h31 { height: 31px; }
.h33 { height: 33px; }

.grid td, .grid th {
  padding: 0;
  border: 1px solid #d4d4d4;
  line-height: 1;
  text-align: center;
  overflow: hidden;
  white-space: nowrap;
}

.grid th {
  font-weight: 400;
  font-size: 15.500px;
  font-family: "Liberation Sans", sans-serif;
  color: #444;
  background: #fff;
  border-right-color: #9f9f9f;
  vertical-align: bottom;
  padding-bottom: 2px;
}

.grid .col-heads th {
  border: 0;
  border-bottom: 1px solid #9f9f9f;
  border-right: 1px solid #d4d4d4;
  vertical-align: middle;
  padding-bottom: 0;
}

.corner {
  position: relative;
}

.corner i {
  position: absolute;
  right: 3px;
  bottom: 2px;
  border-left: 14px solid transparent;
  border-bottom: 14px solid #d8d8d8;
}

.grid .sel-col {
  background: #e1e1e1;
  color: #217346;
  font-weight: 700;
  border-bottom: 2px solid #217346;
}

.sel-row th {
  background: #e1e1e1;
  color: #217346;
  font-weight: 700;
  border-right: 2px solid #217346;
}

.grid .banner {
  background: #34495e;
  color: #fff;
  font-family: "Liberation Sans", sans-serif;
  font-weight: 700;
  font-size: 60px;
  border-color: #000;
  padding: 2px 0 0 84px;
  white-space: pre;
}

.grid .band {
  background: #2c3e50;
  border-color: #000;
}

.grid .day {
  background: #dce6f1;
  color: #1f497d;
  font-family: "Liberation Serif", serif;
  font-size: 25.500px;
  padding-top: 2px;
  border-color: #000;
}

.ar {
  font-family: "DejaVu Sans", sans-serif;
  font-size: 14px;
}

.k {
  font-family: "Lato", "DejaVu Sans", sans-serif;
  font-weight: 700;
  font-size: 21px;
  border-left-color: #000 !important;
  border-right-color: #000 !important;
}

.grid .k-black { background: #262626; color: #fff; font-size: 17px; border-color: #000; }
.grid .k-blue { background: #4f81bd; color: #fff; border-color: #4f81bd #000; }
.grid .k-red { background: #c0504d; color: #fff; font-size: 17.500px; font-weight: 400; padding-top: 2px; border-color: #c0504d #000; }
.grid .k-gray { background: #7f7f7f; color: #fff; outline: 1px solid #3f3f3f; outline-offset: -1px; box-shadow: inset 0 0 0 2px #7f7f7f, inset 0 0 0 3px #3f3f3f; }
.grid .k-yellow { background: #ff0; color: #000; border-color: #ff0 #000; font-size: 20px; }
.grid .k-green { background: #c6efce; color: #006100; border-color: #c6efce #000; }
.grid .k-purple { background: #8064a2; color: #fff; border-color: #8064a2 #000; }
.grid .k-orange { background: #f79646; color: #fff; outline: 1px solid #7f5a30; outline-offset: -1px; box-shadow: inset 0 0 0 2px #f79646, inset 0 0 0 3px #7f5a30; }
.grid .k-review { background: #c6efce; color: #006100; font-weight: 400; font-size: 15px; border-color: #c6efce #000; }
.grid .k-pink { background: #ffc7ce; color: #9c0006; font-size: 18.500px; padding-top: 2px; border-color: #ffc7ce #000 #000; }

.k-review .ar {
  font-size: 15px;
}

.grid .ev {
  color: #fff;
  font-size: 16.300px;
  padding-top: 3px;
}

.grid .blue { background: #4f81bd; border-color: #4f81bd; }
.grid .red { background: #c0504d; border-color: #c0504d; }
.grid .lilac { background: #b1a0c7; border-color: #b1a0c7; }

.grid .check {
  background: #a5a5a5;
  font-weight: 700;
  outline: 1px solid #3f3f3f;
  box-shadow: inset 0 0 0 1px #ddd, inset 0 0 0 2px #3f3f3f;
}

.check .ar {
  font-weight: 400;
  font-size: 13.500px;
}

.grid .red-box {
  background: #c0504d;
  outline: 1px solid #3f3f3f;
  box-shadow: inset 0 0 0 1px #d88, inset 0 0 0 2px #3f3f3f;
}

.grid .selected {
  position: relative;
  overflow: visible;
  outline: 2px solid #217346;
  outline-offset: 0;
  box-shadow: inset 0 0 0 1px #fff;
}

.handle {
  position: absolute;
  right: -4px;
  bottom: -4px;
  width: 6px;
  height: 6px;
  background: #217346;
  border: 1px solid #fff;
}

/* vertical scrollbar */
.vscroll {
  flex: 1;
  background: #f1f1f1;
  display: flex;
  flex-direction: column;
  padding: 2px 3px 0 3px;
}

.sb-btn {
  height: 20px;
  background: #fff;
  border: 1px solid #ababab;
  display: flex;
  align-items: center;
  justify-content: center;
  flex: none;
}

.sb-thumb {
  height: 275px;
  background: #fff;
  border: 1px solid #ababab;
  flex: none;
}

.sb-track {
  flex: 1;
}

/* sheet tabs */
.sheet-tabs {
  height: 29px;
  flex: none;
  display: flex;
  align-items: flex-start;
  background: #f5f5f5;
  position: relative;
}

.nav-tri {
  margin-top: 10px;
}

.tri-l, .tri-r {
  display: block;
  width: 0;
  height: 0;
  border-top: 5px solid transparent;
  border-bottom: 5px solid transparent;
}

.tri-l { border-right: 5px solid #bdbdbd; }
.tri-r { border-left: 5px solid #bdbdbd; }
.tri-l.dark { border-right-color: #666; }
.tri-r.dark { border-left-color: #666; }

.nav-tri.tri-l { margin-left: 28px; }
.nav-tri.tri-r { margin-left: 24px; }

.sheet-tab {
  width: 242px;
  height: 26px;
  margin-left: 41px;
  background: #fff;
  border: 1px solid #ababab;
  border-top: 0;
  border-bottom: 2px solid #217346;
  color: #217346;
  font-family: "Lato", sans-serif;
  font-weight: 700;
  font-size: 18px;
  text-align: center;
  line-height: 22px;
}

.add-sheet {
  margin: 4px 0 0 33px;
}

.tdots {
  width: 3px;
  height: 14px;
  margin: 7px 0 0 561px;
  background: radial-gradient(circle, #aaa 1px, transparent 1.300px);
  background-size: 3px 4px;
}

.hscroll {
  width: 916px;
  height: 19px;
  margin: 5px 0 0 17px;
  display: flex;
  flex: none;
}

.hs-btn {
  width: 19px;
  background: #fff;
  border: 1px solid #ababab;
  display: flex;
  align-items: center;
  justify-content: center;
  flex: none;
}

.hs-thumb {
  width: 780px;
  background: #fff;
  border: 1px solid #ababab;
  border-left: 0;
}

.hs-track {
  flex: 1;
  background: #e9e9e9;
}

/* status bar */
.status {
  height: 27px;
  flex: none;
  display: flex;
  align-items: center;
  background: #217346;
  color: #fff;
  font-size: 12px;
  padding-left: 7px;
}

.views {
  display: flex;
  margin-left: auto;
  height: 27px;
}

.view {
  width: 41px;
  display: flex;
  align-items: center;
  justify-content: center;
}

.view-on {
  background: #0f5c30;
}

.zoomer {
  width: 154px;
  margin-left: 5px;
  display: flex;
  align-items: center;
  gap: 4px;
}

.z-minus {
  width: 9px;
  height: 2px;
  background: #fff;
}

.z-track {
  width: 125px;
  height: 1px;
  background: #fff;
  position: relative;
}

.z-thumb {
  position: absolute;
  left: 60px;
  top: -7px;
  width: 4px;
  height: 15px;
  background: #fff;
}

.z-plus {
  width: 11px;
  height: 11px;
  margin-left: 8px;
  background: linear-gradient(#fff, #fff) center / 11px 2px no-repeat, linear-gradient(#fff, #fff) center / 2px 11px no-repeat;
}

.pct {
  width: 50px;
  text-align: center;
  margin-left: 7px;
}

/* taskbar */
.taskbar {
  flex: 1;
  display: flex;
  align-items: center;
  background: linear-gradient(90deg, #e7f0fa 0%, #dfe9f8 30%, #d3def3 55%, #dde4f5 70%, #e6eef9 100%);
  font-family: "Open Sans", "DejaVu Sans", sans-serif;
  color: #222;
}

.weather {
  width: 475px;
  flex: none;
  display: flex;
  padding-left: 25px;
}

.w-icon {
  position: relative;
  padding-top: 14px;
  width: 40px;
}

.w-badge {
  position: absolute;
  left: 15px;
  top: 0;
  width: 19px;
  height: 19px;
  border-radius: 50%;
  background: #c8171e;
  color: #fff;
  font-size: 12px;
  font-weight: 700;
  text-align: center;
  line-height: 19px;
}

.w-text {
  display: flex;
  flex-direction: column;
  font-size: 13.500px;
  line-height: 20px;
}

.w-sub {
  font-size: 14.500px;
  color: #555;
}

.search {
  width: 273px;
  height: 38px;
  margin-left: 17px;
  flex: none;
  display: flex;
  align-items: center;
  gap: 11px;
  padding-left: 15px;
  background: #f3f6fc;
  border: 1px solid #cdd5e3;
  border-radius: 19px;
  font-size: 16px;
  color: #555;
  position: relative;
  overflow: hidden;
}

.search-art {
  position: absolute;
  right: 0;
  top: 0;
}

.apps {
  display: flex;
  margin-left: 3px;
  flex: none;
}

.app {
  width: 55px;
  height: 60px;
  display: flex;
  align-items: center;
  justify-content: center;
  position: relative;
}

.app-run::after {
  content: "";
  position: absolute;
  left: 24px;
  bottom: 6px;
  width: 7px;
  height: 3px;
  border-radius: 2px;
  background: #777;
}

.app-active::before {
  content: "";
  position: absolute;
  left: 4px;
  top: 6px;
  width: 47px;
  height: 48px;
  border-radius: 5px;
  background: #f0f4fb;
}

.app-active svg {
  position: relative;
}

.app-bar {
  position: absolute;
  left: 17px;
  bottom: 6px;
  width: 21px;
  height: 3px;
  border-radius: 2px;
  background: #0f7fd8;
}

.new-tag {
  font-family: "Liberation Sans", sans-serif;
  font-size: 8px;
  font-weight: 700;
  fill: #10262a;
}

.chrome-a {
  font-family: "Liberation Sans", sans-serif;
  font-size: 8px;
  fill: #fff;
}

.tray {
  flex: 1;
  display: flex;
  align-items: center;
  padding-left: 155px;
}

.lang {
  margin: 0 34px 0 29px;
  font-family: "DejaVu Sans", sans-serif;
  font-size: 13px;
}

.tray-wifi {
  margin-right: 9px;
}

.tray-icon {
  margin-right: 9px;
}

.clock {
  display: flex;
  flex-direction: column;
  align-items: flex-end;
  width: 72px;
  margin-left: 5px;
  font-size: 14px;
  line-height: 20px;
}

.notif {
  width: 20px;
  height: 20px;
  margin-left: 10px;
  border-radius: 50%;
  background: #0f78d4;
  color: #fff;
  font-size: 12px;
  text-align: center;
  line-height: 20px;
}

/* overlays */
.activate {
  position: absolute;
  left: 1554px;
  top: 914px;
  color: #c4c4c4;
  font-family: "Open Sans", sans-serif;
  pointer-events: none;
}

.act-title {
  font-size: 24px;
  line-height: 34px;
}

.act-sub {
  font-size: 17.500px;
  line-height: 24px;
}

.watermark {
  position: absolute;
  left: 840px;
  top: 943px;
  width: 240px;
  text-align: center;
  color: rgba(140, 140, 140, .38);
  pointer-events: none;
}

.wm-logo {
  font-family: "DejaVu Sans", sans-serif;
  font-weight: 700;
  font-size: 66px;
  line-height: 84px;
  transform: scaleY(1.3);
}

.wm-url {
  font-family: "DejaVu Sans", sans-serif;
  font-size: 36px;
  letter-spacing: 2px;
  line-height: 30px;
  color: rgba(130, 130, 130, .13);
}
```
